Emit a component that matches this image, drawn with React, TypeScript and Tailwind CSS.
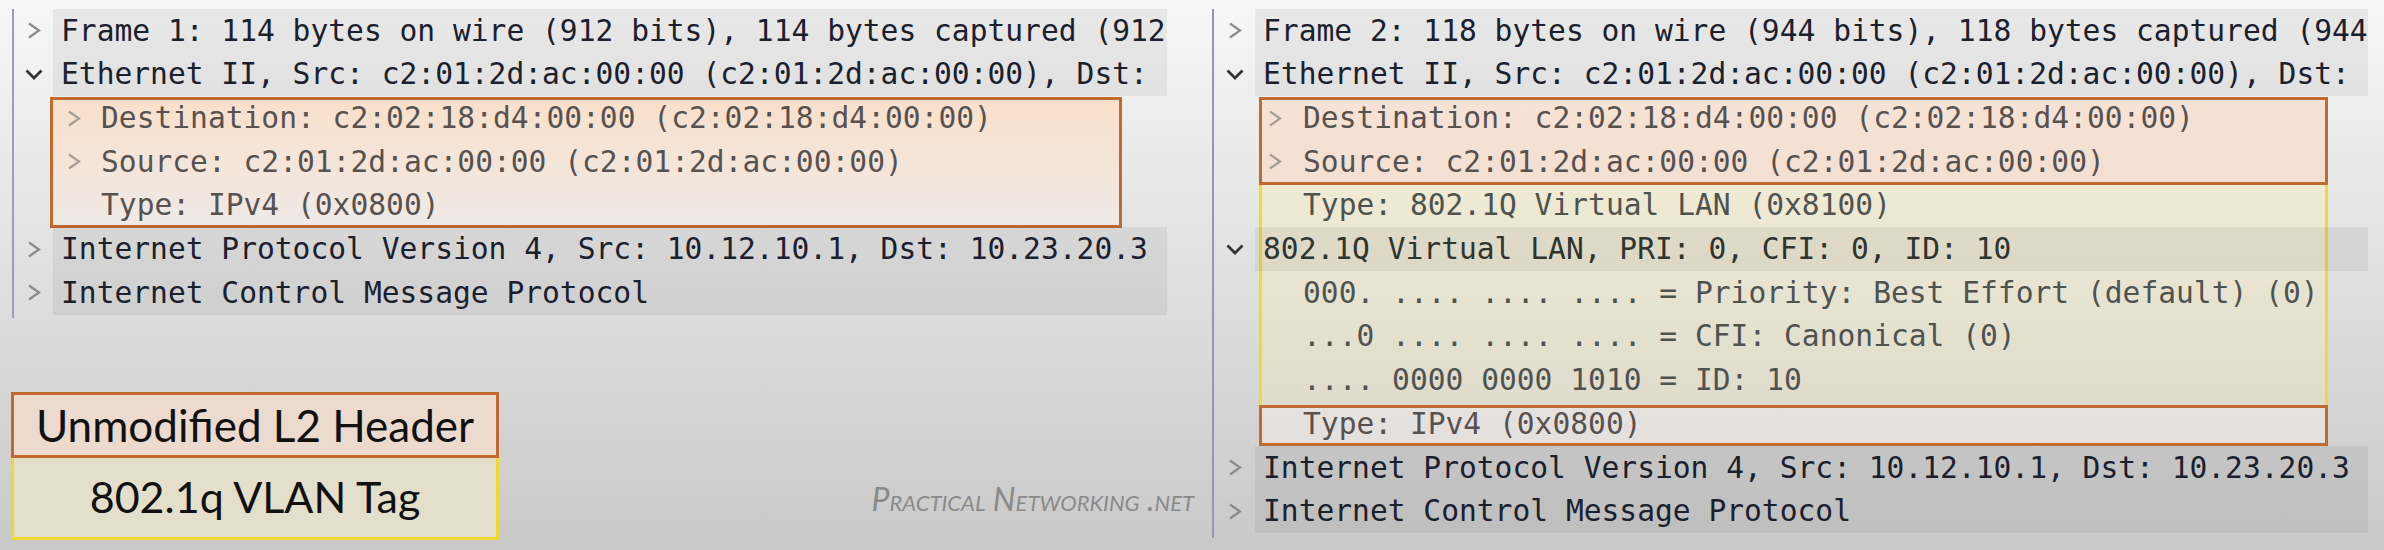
import React from "react"

type Row = {
  text: string
  child?: boolean
  icon?: "closed" | "open"
  tone?: "main" | "box" | "yellow"
}

const leftRows: Row[] = [
  { text: "Frame 1: 114 bytes on wire (912 bits), 114 bytes captured (912", icon: "closed" },
  { text: "Ethernet II, Src: c2:01:2d:ac:00:00 (c2:01:2d:ac:00:00), Dst:", icon: "open" },
  { text: "Destination: c2:02:18:d4:00:00 (c2:02:18:d4:00:00)", child: true, icon: "closed", tone: "box" },
  { text: "Source: c2:01:2d:ac:00:00 (c2:01:2d:ac:00:00)", child: true, icon: "closed", tone: "box" },
  { text: "Type: IPv4 (0x0800)", child: true, tone: "box" },
  { text: "Internet Protocol Version 4, Src: 10.12.10.1, Dst: 10.23.20.3", icon: "closed" },
  { text: "Internet Control Message Protocol", icon: "closed" },
]

const rightRows: Row[] = [
  { text: "Frame 2: 118 bytes on wire (944 bits), 118 bytes captured (944", icon: "closed" },
  { text: "Ethernet II, Src: c2:01:2d:ac:00:00 (c2:01:2d:ac:00:00), Dst:", icon: "open" },
  { text: "Destination: c2:02:18:d4:00:00 (c2:02:18:d4:00:00)", child: true, icon: "closed", tone: "box" },
  { text: "Source: c2:01:2d:ac:00:00 (c2:01:2d:ac:00:00)", child: true, icon: "closed", tone: "box" },
  { text: "Type: 802.1Q Virtual LAN (0x8100)", child: true, tone: "yellow" },
  { text: "802.1Q Virtual LAN, PRI: 0, CFI: 0, ID: 10", icon: "open", tone: "yellow" },
  { text: "000. .... .... .... = Priority: Best Effort (default) (0)", child: true, tone: "yellow" },
  { text: "...0 .... .... .... = CFI: Canonical (0)", child: true, tone: "yellow" },
  { text: ".... 0000 0000 1010 = ID: 10", child: true, tone: "yellow" },
  { text: "Type: IPv4 (0x0800)", child: true, tone: "box" },
  { text: "Internet Protocol Version 4, Src: 10.12.10.1, Dst: 10.23.20.3", icon: "closed" },
  { text: "Internet Control Message Protocol", icon: "closed" },
]

function Chevron({ kind, light }: { kind?: "closed" | "open"; light?: boolean }) {
  if (kind === "closed")
    return (
      <svg width="14" height="17" viewBox="0 0 14 17">
        <polyline points="2,1.5 12,8.5 2,15.5" fill="none" stroke={light ? "#a39c97" : "#8a8a8a"} strokeWidth="2.2" />
      </svg>
    )
  if (kind === "open")
    return (
      <svg width="18" height="11" viewBox="0 0 18 11">
        <polyline points="1.5,1.5 9,9 16.5,1.5" fill="none" stroke="#333" strokeWidth="2.8" />
      </svg>
    )
  return null
}

function TreeRow({ row, cell }: { row: Row; cell: string }) {
  const color =
    row.tone === "box" ? "text-[#57524f]" : row.tone === "yellow" ? (row.child ? "text-[#4f5350]" : "text-[#30342f]") : "text-[#1b202d]"
  return (
    <div className="relative flex h-[43.7px] items-center">
      {row.child && <div className="w-[40px] shrink-0" />}
      <div className={`${cell} flex h-full shrink-0 items-center justify-center`}>
        <Chevron kind={row.icon} light={row.child} />
      </div>
      <div
        className={`flex h-full min-w-0 flex-1 items-center overflow-hidden whitespace-nowrap pl-[8px] ${
          row.child ? "" : "bg-black/[0.055]"
        } ${color}`}
      >
        {row.text}
      </div>
    </div>
  )
}

export default function App() {
  return (
    <div className="flex h-[550px] w-[2384px] overflow-hidden bg-linear-to-b from-[#f7f7f7] to-[#c9c9c9] font-['DejaVu_Sans_Mono',monospace] text-[29.6px]">
      <div className="flex w-[1212px] shrink-0 flex-col">
        <div className="relative ml-[12px] mt-[9px] h-[309px] w-[1155px] border-l-2 border-[#9c9cc2]">
          <div className="absolute left-[36px] top-[88px] h-[131px] w-[1072px] border-[3px] border-[#c06a30] bg-linear-to-b from-[#ffd6b4]/60 to-[#fff0e8]/40" />
          {leftRows.map((r, i) => (
            <TreeRow key={i} row={r} cell="w-[39px]" />
          ))}
        </div>

        <div className="mt-auto flex items-end pb-[10px] pl-[11px] pr-[18px]">
          <div className="w-[488px] font-['Lato',sans-serif] text-[#111]">
            <div className="flex h-[66px] items-center justify-center border-[3px] border-[#c06a30] bg-[#ebdacd] text-[44px]">
              Unmodified L2 Header
            </div>
            <div className="flex h-[82px] items-center justify-center border-[3px] border-t-0 border-[#f2d731] bg-[#e3dfca] text-[43px]">
              802.1q VLAN Tag
            </div>
          </div>
          <div className="mb-[17px] ml-auto font-['Lato',sans-serif] text-[32px] italic text-[#8a8a8a] [font-variant:small-caps]">
            Practical Networking .net
          </div>
        </div>
      </div>

      <div className="relative mr-[17px] mt-[9px] h-[529px] flex-1 border-l-2 border-[#9494bc]">
        <div className="absolute left-[45px] top-[173px] h-[226px] w-[1069px] border-[3px] border-[#f3d82e] bg-linear-to-b from-[#f6edc0]/50 to-[#efe6c2]/40" />
        <div className="absolute left-[45px] top-[88px] h-[88px] w-[1069px] border-[3px] border-[#c06a30] bg-[#ffd8bc]/50" />
        <div className="absolute left-[45px] top-[396px] h-[41px] w-[1069px] border-[3px] border-[#c06a30] bg-[#fff4ee]/40" />
        {rightRows.map((r, i) => (
          <TreeRow key={i} row={r} cell="w-[41px]" />
        ))}
      </div>
    </div>
  )
}
